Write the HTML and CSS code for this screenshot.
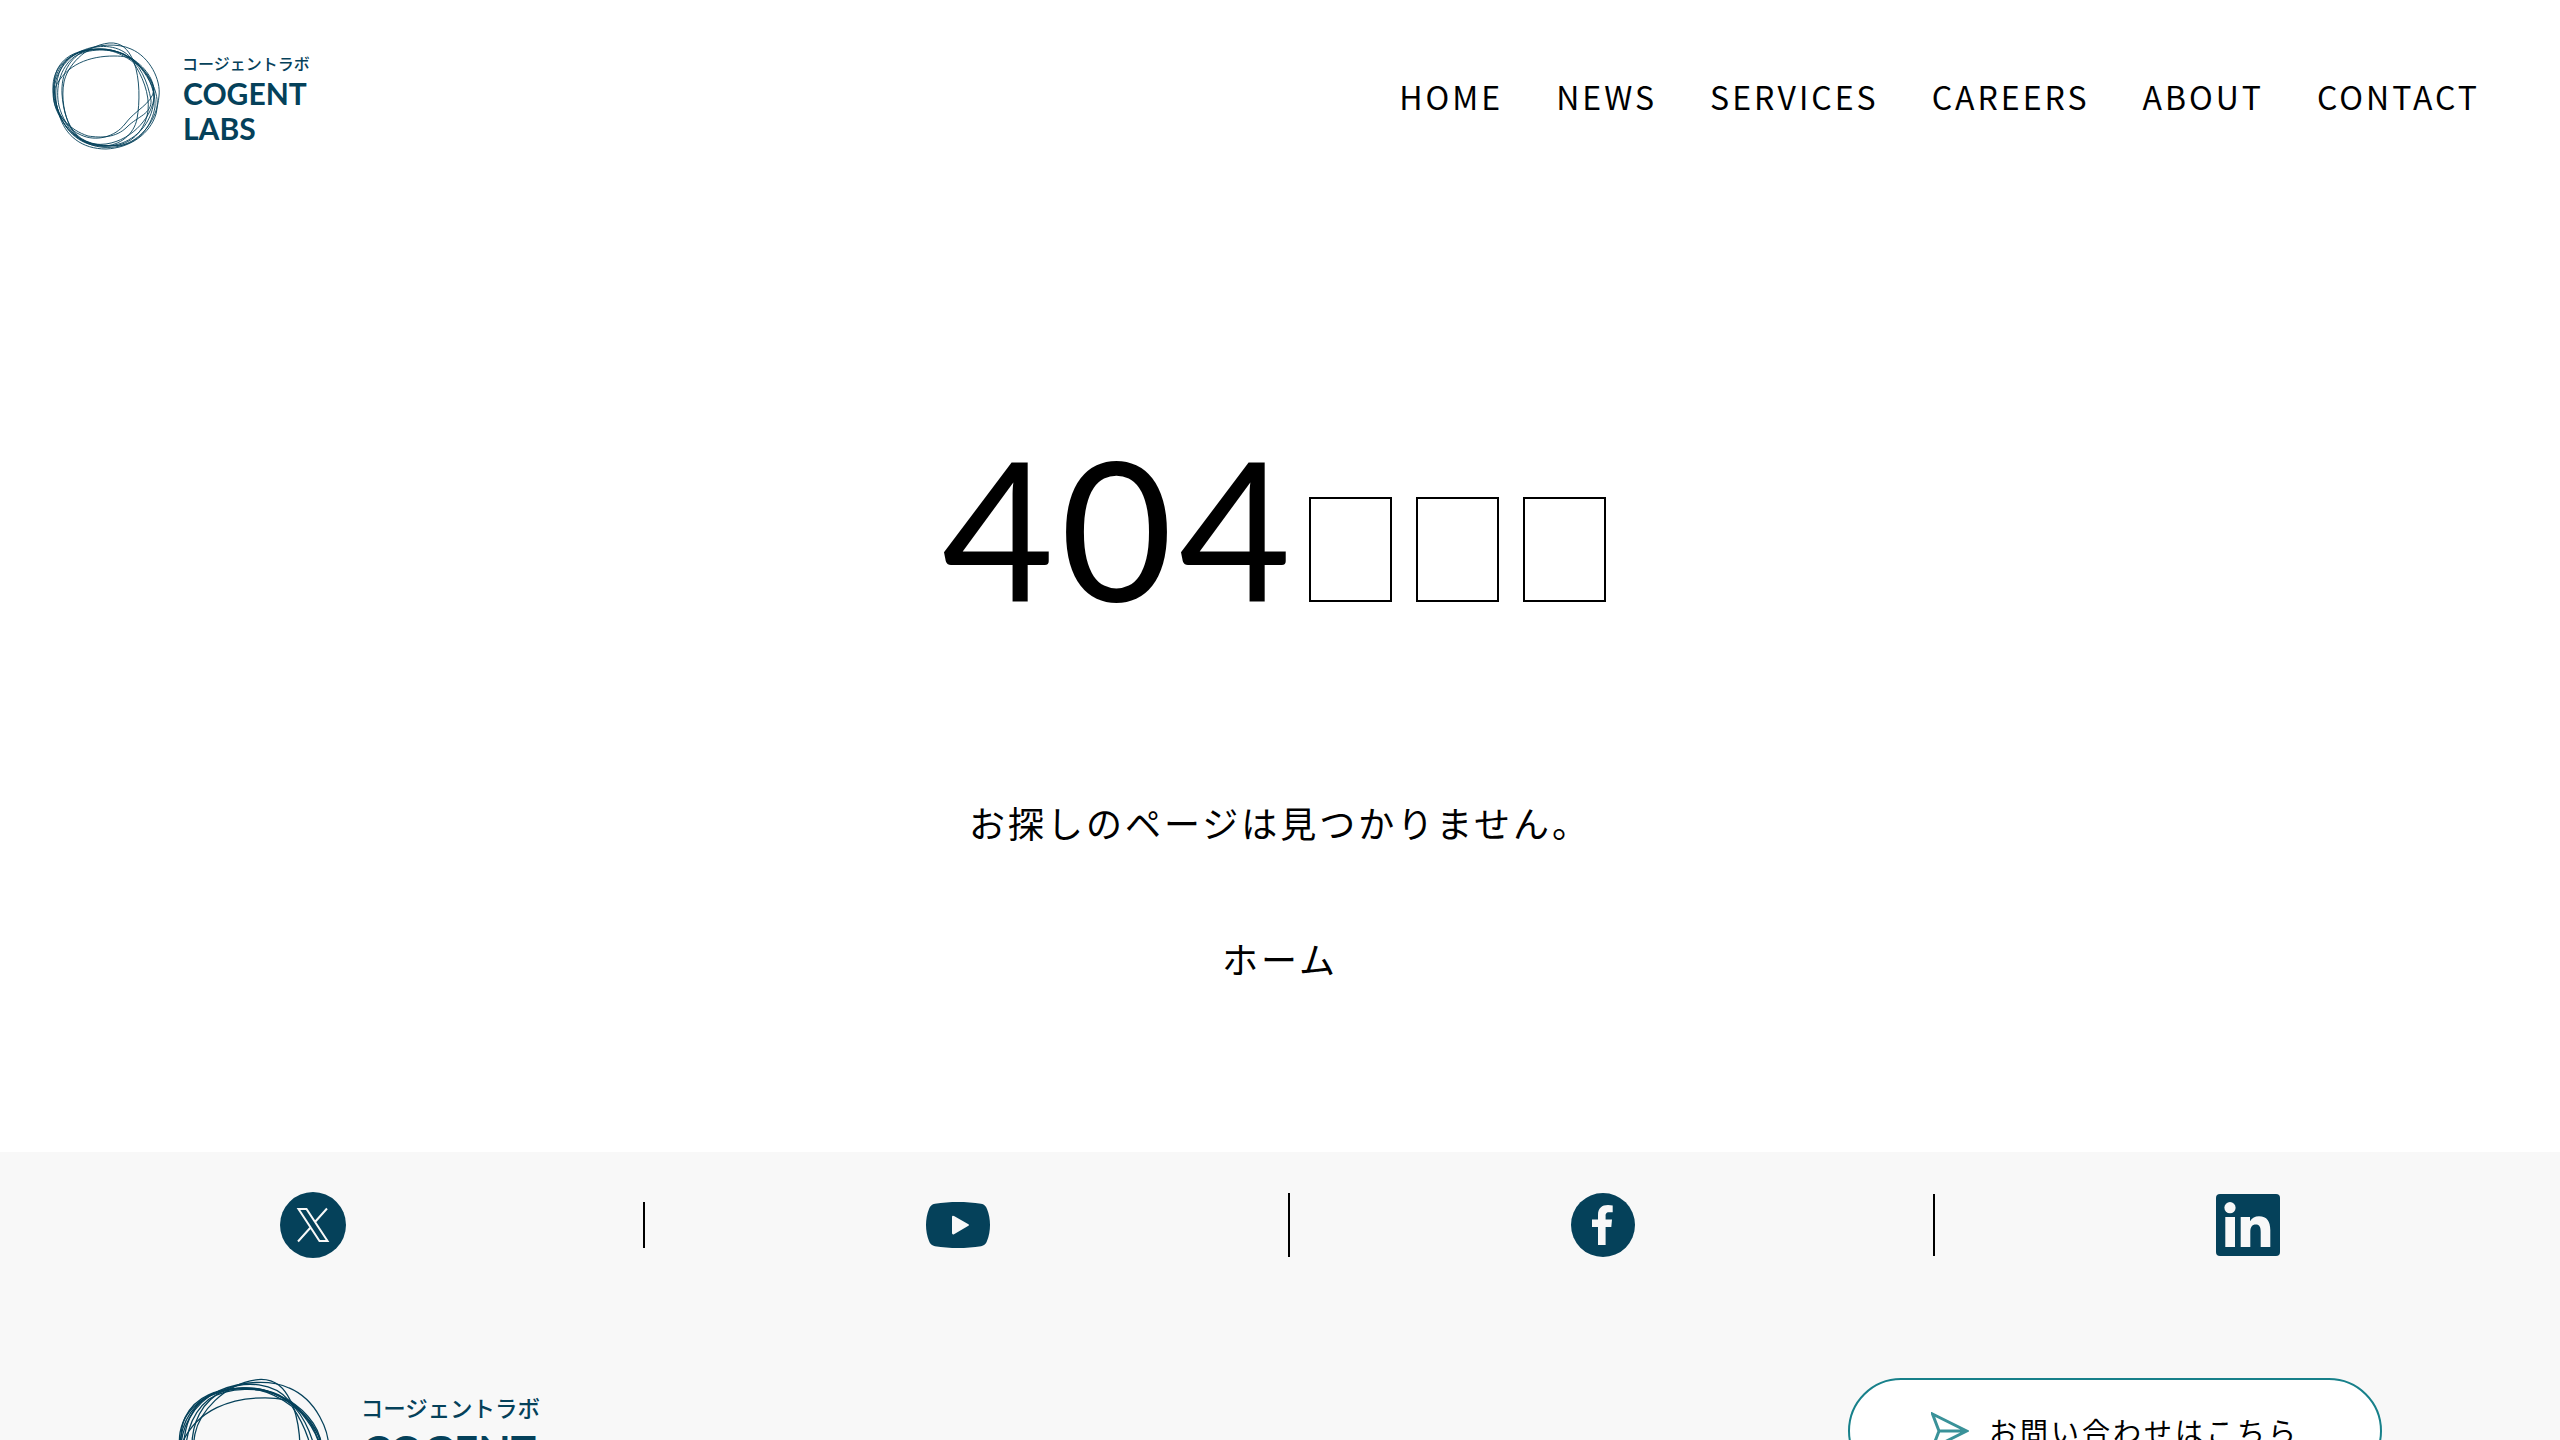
FILE: index.html
```html
<!DOCTYPE html>
<html lang="ja">
<head>
<meta charset="utf-8">
<meta name="viewport" content="width=device-width, initial-scale=1">
<title>404エラー | コージェントラボ</title>
<link rel="stylesheet" href="styles.css">
</head>
<body>
<header class="header">
  <a class="header-logo" href="#" aria-label="COGENT LABS"><svg class="logo" viewBox="0 0 264 108">
    <g class="logo-ring" id="ring">
      <path d="M5 28C13 12 28 8 46 7C66 6 80 16 92 29C102 41 108 56 104 72C98 92 78 106 54 107C30 107 13 94 7 72C2 55 0 39 5 28Z"/>
      <path d="M1 47C0 26 16 12 35 8C52 5 68 8 82 19C96 30 103 41 102 56C101 78 88 94 70 101C50 108 28 104 15 86C6 73 2 60 1 47Z"/>
      <path d="M3 46C14 22 38 14 62 14C72 14 78 15 82 20C88 37 88 60 85 77C82 92 68 104 51 104C29 103 14 89 8 74C4 63 2 54 3 46Z"/>
      <path d="M12 40C15 25 32 4 57 1C70 0 76 8 80 16C91 28 101 40 102 55C101 72 82 98 54 102C38 104 26 98 20 88C12 75 9 55 12 40Z"/>
      <path d="M2 58C0 36 11 18 29 9C46 2 66 1 79 7C98 15 109 38 107 54C105 78 90 98 68 104C46 109 26 101 15 83C8 73 3 67 2 58Z"/>
      <path d="M4 60C3 44 5 28 16 17C28 5 56 5 72 12C88 20 96 41 99 58C100 72 86 74 75 85C64 96 49 96 36 94C18 88 6 75 4 60Z"/>
      <path d="M7 64C3 46 8 26 22 15C36 6 59 6 73 13C87 19 101 33 102 48C100 62 83 68 73 82C63 95 44 100 29 93C16 88 10 75 7 64Z"/>
      <path d="M10 52C9 32 17 16 34 8C48 2 68 3 79 16C94 27 104 45 103 65C100 82 89 99 71 103C54 105 35 103 25 93C15 83 11 67 10 52Z"/>
      <path d="M1 50C2 30 12 15 30 10C51 4 66 9 81 20C90 33 98 52 96 69C94 84 84 99 67 103C46 107 26 99 14 84C5 72 1 62 1 50Z"/>
    </g>
    <g class="logo-text">
      <text class="logo-kana" x="130" y="28">コージェントラボ</text>
      <text class="logo-name" x="131" y="63">COGENT</text>
      <text class="logo-name" x="131" y="98">LABS</text>
    </g>
  </svg></a>
  <nav class="nav">
    <a href="#">HOME</a>
    <a href="#">NEWS</a>
    <a href="#">SERVICES</a>
    <a href="#">CAREERS</a>
    <a href="#">ABOUT</a>
    <a href="#">CONTACT</a>
  </nav>
</header>

<main class="main">
  <h1 class="title">404<span class="boxes" aria-hidden="true"><span class="box"></span><span class="box"></span><span class="box"></span></span></h1>
  <p class="message">お探しのページは見つかりません。</p>
  <a class="home" href="#">ホーム</a>
</main>

<footer class="footer">
  <ul class="social">
    <li><a href="#" aria-label="X"><svg width="66" height="66" viewBox="0 0 66 66">
      <circle class="ink" cx="33" cy="33" r="33"/>
      <path class="x-line" d="M18.500 17H26.500L47.500 49H39.500ZM47 16.500L34.500 30.500M31 35L18 49.500"/>
    </svg></a></li>
    <li><a href="#" aria-label="YouTube"><svg width="64" height="46" viewBox="0 0 64 46">
      <path class="ink" d="M9 1.800C24 -.6 40 -.6 55 1.800C58 2.300 60 4 61 7C65 17 65 29 61 39C60 42 58 43.700 55 44.200C40 46.600 24 46.600 9 44.200C6 43.700 4 42 3 39C-1 29 -1 17 3 7C4 4 6 2.300 9 1.800Z"/>
      <path class="paper" d="M26 15Q26 13 28 14L42 22Q44 23 42 24L28 32.300Q26 33 26 31Z"/>
    </svg></a></li>
    <li><a href="#" aria-label="Facebook"><svg width="64" height="64" viewBox="0 0 64 64">
      <circle class="ink" cx="32" cy="32" r="32"/>
      <path class="paper" d="M27 52V34H21V26.500H27V22C27 15 31 12 37 12Q39.500 12 41.700 12.500V19.200H38C35 19.200 34.600 21 34.600 23V26.500H41L40.300 34H34.600V52Z"/>
    </svg></a></li>
    <li><a href="#" aria-label="LinkedIn"><svg width="64" height="62" viewBox="0 0 64 62">
      <rect class="ink" width="64" height="62" rx="4"/>
      <circle class="paper" cx="14" cy="13.700" r="5.600"/>
      <path class="paper" d="M9.300 23H19V53H9.300ZM24.700 23H34V27.200C36 24 39 22.300 43 22.300C51 22.300 54.300 27.500 54.300 36V53H44.700V38C44.700 33 43.500 30.500 39.800 30.500C36 30.500 34.300 33 34.300 38V53H24.700Z"/>
    </svg></a></li>
  </ul>
  <div class="footer-main">
    <a class="footer-logo" href="#" aria-label="COGENT LABS"><svg class="logo" viewBox="0 0 264 108">
      <use href="#ring"/>
      <g class="logo-text">
        <text class="logo-kana" x="130" y="28">コージェントラボ</text>
        <text class="logo-name" x="131" y="63">COGENT</text>
        <text class="logo-name" x="131" y="98">LABS</text>
      </g>
    </svg></a>
    <a class="contact" href="#">
      <svg class="plane" width="38" height="38" viewBox="0 0 38 38"><path d="M1.500 2L35.500 19L1.500 36L8 19ZM8 19H35.500"/></svg>
      お問い合わせはこちら
    </a>
  </div>
</footer>
</body>
</html>
```
FILE: styles.css
```css
* {
  box-sizing: border-box;
}

body {
  margin: 0;
  background: #fff;
  color: #000;
  font-family: "Noto Sans CJK JP", sans-serif;
  font-size: 36px;
  letter-spacing: 3px;
}

a {
  color: inherit;
  text-decoration: none;
}

svg {
  display: block;
}

/* Logo */
.logo {
  width: 100%;
  height: 100%;
}

.logo-ring {
  fill: none;
  stroke: #05415a;
  stroke-width: 0.9;
}

.logo-text {
  fill: #05415a;
  letter-spacing: 0;
}

.logo-kana {
  font-size: 16px;
  font-weight: 500;
}

.logo-name {
  font-family: Lato, sans-serif;
  font-size: 30px;
  font-weight: 700;
}

/* Header */
.header {
  display: flex;
  justify-content: space-between;
  align-items: center;
  height: 192px;
  padding: 0 80px 0 52px;
}

.header-logo {
  width: 264px;
  height: 108px;
}

.nav {
  display: flex;
  gap: 53px;
  font-size: 32px;
}

/* Error message */
.main {
  display: flex;
  flex-direction: column;
  align-items: center;
  height: 960px;
  padding-top: 235px;
}

.title {
  display: flex;
  align-items: baseline;
  margin: 0;
  font-family: Lato, sans-serif;
  font-size: 194px;
  font-weight: 400;
  line-height: 200px;
  letter-spacing: 6px;
}

.boxes {
  display: flex;
  gap: 24px;
  margin: 0 12px;
}

.box {
  width: 83px;
  height: 105px;
  border: 2px solid #000;
}

.message {
  margin: 168px 0 0;
  line-height: 54px;
}

.home {
  margin-top: 82px;
  line-height: 54px;
}

/* Footer */
.footer {
  padding: 40px 0 80px;
  background: #f8f8f8;
}

.social {
  display: flex;
  align-items: center;
  gap: 18px;
  margin: 0;
  padding: 0;
  list-style: none;
}

.social li {
  box-sizing: content-box;
  display: flex;
  justify-content: center;
  flex: 1;
}

.social li + li {
  border-left: 2px solid #000;
}

.ink {
  fill: #05415a;
}

.paper {
  fill: #f8f8f8;
}

.x-line {
  fill: none;
  stroke: #f8f8f8;
  stroke-width: 2;
}

.footer-main {
  display: flex;
  justify-content: space-between;
  align-items: flex-start;
  padding: 120px 178px 0;
}

.footer-logo {
  width: 371px;
  height: 152px;
}

.contact {
  display: flex;
  justify-content: center;
  align-items: center;
  gap: 20px;
  width: 534px;
  height: 106px;
  border: 2px solid #17808a;
  border-radius: 53px;
  background: #fff;
  font-size: 28px;
}

.plane {
  fill: none;
  stroke: #3a9299;
  stroke-width: 3;
}
```
